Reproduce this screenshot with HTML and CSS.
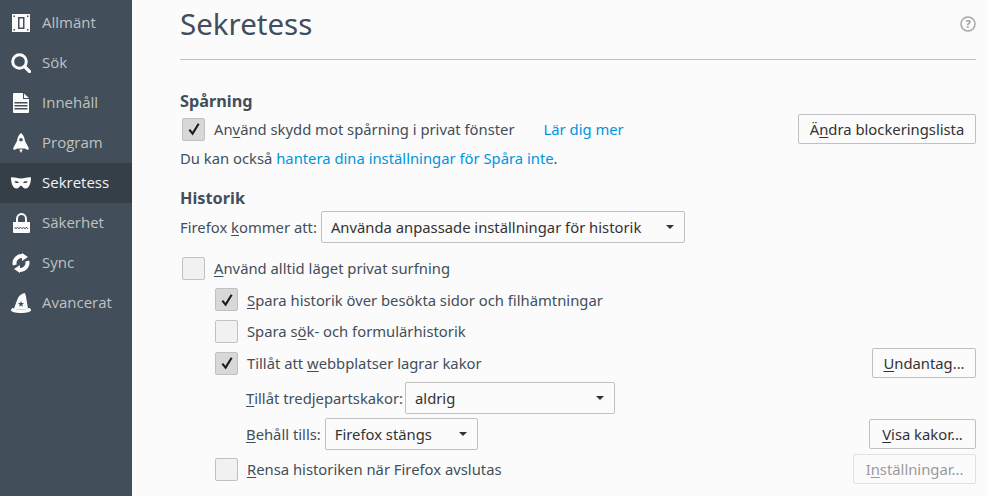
FILE: index.html
```html
<!DOCTYPE html>
<html lang="sv">
<head>
<meta charset="utf-8">
<title>Sekretess</title>
<link rel="stylesheet" href="styles.css">
</head>
<body>
<div class="app">
  <nav class="sidebar">
    <div class="nav-item">
      <svg class="nav-icon" viewBox="0 0 20 20"><path fill="#fbfbfb" fill-rule="evenodd" d="M1 1h18v18H1zM2.500 2.500v1.500h1.500V2.500zM16 2.500v1.500h1.500V2.500zM2.500 16v1.500h1.500V16zM16 16v1.500h1.500V16zM7 4v12h6.500V4zM8.500 5.500h3.500v9H8.500z"/></svg>
      <span>Allmänt</span>
    </div>
    <div class="nav-item">
      <svg class="nav-icon" viewBox="0 0 20 20"><circle cx="8.500" cy="8.500" r="6.800" fill="none" stroke="#fbfbfb" stroke-width="3"/><path d="M13.500 13.500l5 5" stroke="#fbfbfb" stroke-width="3.200" stroke-linecap="round"/></svg>
      <span>Sök</span>
    </div>
    <div class="nav-item">
      <svg class="nav-icon" viewBox="0 0 20 20"><path fill="#fbfbfb" fill-rule="evenodd" d="M3 0h9v6h6v13a1 1 0 0 1-1 1H3a1 1 0 0 1-1-1V1a1 1 0 0 1 1-1zM13 0.500l5 4.500h-5zM3.500 9v1.500h13V9zM3.500 12v1.500h13V12zM3.500 15v1.500h13V15z"/></svg>
      <span>Innehåll</span>
    </div>
    <div class="nav-item">
      <svg class="nav-icon" viewBox="0 0 20 20"><path fill="#fbfbfb" fill-rule="evenodd" d="M10 0c2.200 1.800 3.600 4.500 4 8l3.500 6.500c.5 1 .2 2-.5 2.500l-3.500-1.500h-7L3 17c-.7-.5-1-1.500-.5-2.500L6 8c.4-3.500 1.800-6.200 4-8zM10 5a1.800 1.800 0 1 0 0 3.600A1.800 1.800 0 0 0 10 5zM8.300 16.500h3.400L10 20z"/></svg>
      <span>Program</span>
    </div>
    <div class="nav-item active">
      <svg class="nav-icon" viewBox="0 0 20 20"><path fill="#fbfbfb" fill-rule="evenodd" d="M0 4.500c3-.6 6 1 10 1s7-1.600 10-1c0 6-2 11-5.500 11-2.500 0-3-2.800-4.500-2.800S8 15.500 5.500 15.500C2 15.500 0 10.500 0 4.500zM3.500 8.500c.5 1.500 3 2.200 4.500 1-1-1.200-3.500-1.800-4.500-1zM16.500 8.500c-1-.8-3.500-.2-4.500 1 1.500 1.200 4 .5 4.500-1z"/></svg>
      <span>Sekretess</span>
    </div>
    <div class="nav-item">
      <svg class="nav-icon" viewBox="0 0 20 20"><path fill="#fbfbfb" fill-rule="evenodd" d="M2 9h3V6a5.500 6 0 0 1 11 0v3h3v10a1 1 0 0 1-1 1H3a1 1 0 0 1-1-1zM7 9h7V6a3.500 4 0 0 0-7 0z"/><path stroke="#5b6772" stroke-width="1" d="M3.500 14l1.500 2 1.500-2 1.500 2 1.500-2 1.500 2 1.500-2 1.500 2 1.500-2 1.500 2" fill="none"/></svg>
      <span>Säkerhet</span>
    </div>
    <div class="nav-item">
      <svg class="nav-icon" viewBox="0 0 20 20"><path fill="none" stroke="#fbfbfb" stroke-width="4" d="M12 3.200A7 7 0 0 0 3.800 12M8 16.800A7 7 0 0 0 16.200 8"/><path fill="#fbfbfb" d="M11 0l6 4-6 4zM9 20l-6-4 6-4z"/></svg>
      <span>Sync</span>
    </div>
    <div class="nav-item">
      <svg class="nav-icon" viewBox="0 0 20 20"><path fill="#fbfbfb" fill-rule="evenodd" d="M14 0l1 3.500L17 15.500c-3 1.300-11 1.300-14 0L6.500 6C7.500 3 10 .8 14 0zM10 8l-.8 2-2.200.1 1.700 1.400-.6 2.200L10 12.500l1.900 1.200-.6-2.200 1.700-1.400-2.200-.1z"/><path fill="#fbfbfb" d="M1.500 15c.3 0 .5.100 1 .3 3.500 1.700 11.500 1.700 15 0 .5-.2.700-.3 1-.3 1 .5 1.500 1.300 1.500 2 0 2-4 3-10 3S0 19 0 17c0-.7.500-1.500 1.500-2z"/></svg>
      <span>Avancerat</span>
    </div>
  </nav>

  <main class="content">
    <header class="page-head">
      <h1 class="page-title">Sekretess</h1>
      <svg class="help" viewBox="0 0 16 16"><circle cx="8" cy="8" r="7" fill="none" stroke="#a5a5a5" stroke-width="1.500"/><text x="8" y="12" text-anchor="middle" class="help-mark">?</text></svg>
    </header>

    <section class="tracking">
      <h2 class="section-title">Spårning</h2>
      <div class="row row-track">
        <span class="check checked"><svg viewBox="0 0 12 12"><path d="M2 6.500l2.800 3.500L10 1.500" fill="none" stroke="#1c1c1c" stroke-width="1.800"/></svg></span>
        <span class="label">An<u>v</u>änd skydd mot spårning i privat fönster</span>
        <a class="link learn">Lär dig mer</a>
        <span class="spacer"></span>
        <button class="btn btn-block">Ä<u>n</u>dra blockeringslista</button>
      </div>
      <p class="note">Du kan också <a class="link">hantera dina inställningar för Spåra inte</a>.</p>
    </section>

    <section class="history">
      <h2 class="section-title">Historik</h2>
      <div class="row row-mode">
        <span class="field-label">Firefox <u>k</u>ommer att:</span>
        <div class="select select-mode"><span>Använda anpassade inställningar för historik</span><i class="caret"></i></div>
      </div>
      <div class="row row-always">
        <span class="check"></span>
        <span class="label"><u>A</u>nvänd alltid läget privat surfning</span>
      </div>
      <div class="sub">
        <div class="row row-first">
          <span class="check checked"><svg viewBox="0 0 12 12"><path d="M2 6.500l2.800 3.500L10 1.500" fill="none" stroke="#1c1c1c" stroke-width="1.800"/></svg></span>
          <span class="label"><u>S</u>para historik över besökta sidor och filhämtningar</span>
        </div>
        <div class="row row-opt">
          <span class="check"></span>
          <span class="label">Spara s<u>ö</u>k- och formulärhistorik</span>
        </div>
        <div class="row row-opt">
          <span class="check checked"><svg viewBox="0 0 12 12"><path d="M2 6.500l2.800 3.500L10 1.500" fill="none" stroke="#1c1c1c" stroke-width="1.800"/></svg></span>
          <span class="label">Tillåt att <u>w</u>ebbplatser lagrar kakor</span>
          <span class="spacer"></span>
          <button class="btn btn-except"><u>U</u>ndantag...</button>
        </div>
        <div class="cookie-fields">
          <div class="row row-third">
            <span class="field-label field-tight"><u>T</u>illåt tredjepartskakor:</span>
            <div class="select select-third"><span>aldrig</span><i class="caret"></i></div>
          </div>
          <div class="row row-keep">
            <span class="field-label"><u>B</u>ehåll tills:</span>
            <div class="select select-keep"><span>Firefox stängs</span><i class="caret"></i></div>
            <span class="spacer"></span>
            <button class="btn btn-cookies"><u>V</u>isa kakor...</button>
          </div>
        </div>
        <div class="row row-clear">
          <span class="check"></span>
          <span class="label"><u>R</u>ensa historiken när Firefox avslutas</span>
          <span class="spacer"></span>
          <button class="btn btn-off" disabled>I<u>n</u>ställningar...</button>
        </div>
      </div>
    </section>
  </main>
</div>
</body>
</html>
```

FILE: styles.css
```css
* { box-sizing: border-box; }
html, body { margin: 0; height: 100%; overflow: hidden; }
body {
  background: #fbfbfb;
  color: #424f5a;
  font: 14.8px/20px "Noto Sans", "Open Sans", sans-serif;
}
u { text-decoration-thickness: 1px; text-underline-offset: 2px; }
.app { display: flex; height: 496px; }

.sidebar {
  flex: 0 0 132px;
  background: #424f5a;
  padding-top: 3px;
  font: 15px/20px "Open Sans", "Noto Sans", sans-serif;
  color: #c1c1c1;
}
.nav-item {
  display: flex;
  align-items: center;
  height: 40px;
  padding-left: 11px;
  gap: 11px;
}
.nav-item span { margin-bottom: 2px; }
.nav-item.active { background: #343f48; color: #f2f2f2; }
.nav-icon { width: 20px; height: 20px; flex: none; }

.content { flex: 1; padding: 0 12px 0 48px; min-width: 0; }
.page-head {
  display: flex;
  justify-content: space-between;
  align-items: center;
  height: 60px;
  padding-bottom: 11px;
  border-bottom: 1px solid #c1c1c1;
}
.page-title { margin: 0; font-size: 29.5px; line-height: 48px; font-weight: 400; color: #424f5a; }
.help { width: 16px; height: 16px; }
.help-mark { font: bold 11px "Noto Sans", sans-serif; fill: #9a9a9a; }

.section-title { margin: 0; font-size: 16.3px; line-height: 22px; font-weight: 700; }
.tracking { padding-top: 30px; }
.history { padding-top: 15px; }

.row { display: flex; align-items: center; }
.spacer { flex: 1; }
.row-track { height: 30px; margin-top: 2px; }
.note { margin: 0; padding-top: 4px; line-height: 20px; height: 28px; }
.row-mode { height: 32px; margin-top: 2px; }
.row-always { height: 32px; margin-top: 9px; }
.sub { padding-left: 33px; }
.row-first { height: 31px; }
.row-opt { height: 32px; }
.cookie-fields { padding-left: 33px; }
.row-third { height: 36px; margin-top: 1px; }
.row-keep { height: 36px; }
.row-clear { height: 34px; }

.check {
  width: 23px;
  height: 23px;
  flex: none;
  display: flex;
  align-items: center;
  justify-content: center;
  margin-left: 2px;
  margin-right: 9px;
  background: #f1f1f1;
  border: 1px solid #c1c1c1;
  border-radius: 2px;
}
.check.checked { background: #d8d8d8; }
.check svg { width: 14px; height: 14px; }
.label { white-space: nowrap; }
.field-label { white-space: nowrap; margin-right: 4px; }
.field-tight { margin-right: 2px; }
.link { color: #0095dd; }
.learn { margin-left: 29px; }

.btn {
  height: 30px;
  padding: 0;
  font: inherit;
  color: #333333;
  background: #fbfbfb;
  border: 1px solid #c1c1c1;
  border-radius: 2px;
  white-space: nowrap;
}
.btn-block { width: 178px; }
.btn-except { width: 104px; }
.btn-cookies { width: 107px; }
.btn-off { width: 123px; color: #9a9a9a; border-color: #e1e1e1; }

.select {
  height: 32px;
  display: flex;
  align-items: center;
  justify-content: space-between;
  padding: 0 9px;
  color: #333333;
  background: #fbfbfb;
  border: 1px solid #c1c1c1;
  border-radius: 2px;
}
.select-mode { width: 364px; }
.select-third { width: 210px; }
.select-keep { width: 153px; }
.caret {
  width: 0;
  height: 0;
  border-left: 4.500px solid transparent;
  border-right: 4.500px solid transparent;
  border-top: 4.500px solid #333333;
  margin-right: 1px;
}
```
